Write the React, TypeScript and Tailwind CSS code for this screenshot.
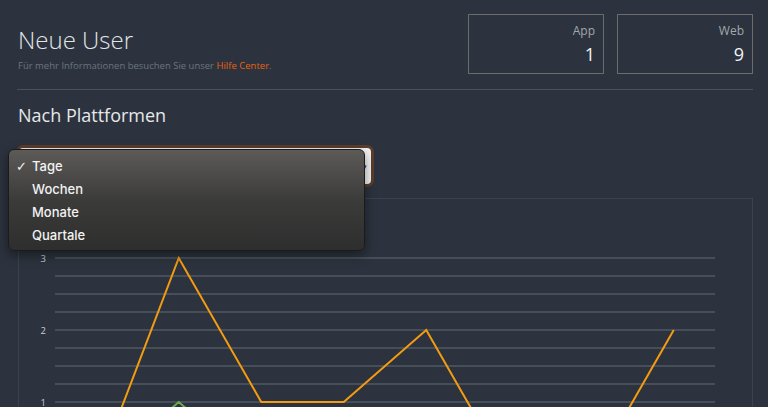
import React from 'react';

const webSeries = [0, 3, 1, 1, 2, 0, 0, 2];
const appSeries = [0, 1, 0, 0, 0, 0, 0, 0];

const xAt = (i: number) => 55 + 41.25 + 82.5 * i;
const yAt = (v: number) => 474 - v * 72;

const toPoints = (data: number[]) => data.map((v, i) => `${xAt(i)},${yAt(v)}`).join(' ');

const StatBox: React.FC<{ label: string; value: string }> = ({ label, value }) => (
  <div className="w-[136px] h-[60px] border border-[#6c6c6c] pr-[8px] pt-[8px] text-right">
    <div className="text-[12px] leading-[16px] text-[#a3a7ab]">{label}</div>
    <div className="mt-[3px] text-[18px] leading-[24px] text-[#f1f2f3]">{value}</div>
  </div>
);

const options = ['Tage', 'Wochen', 'Monate', 'Quartale'];

export default function App() {
  const gridYs = Array.from({ length: 9 }, (_, k) => 258 + 18 * k);

  return (
    <div className="h-[407px] w-[768px] overflow-hidden bg-[#2c333e] font-['Open_Sans',sans-serif]">
      <div className="pl-[17px] pr-[15px] pt-[14px]">
        {/* Header */}
        <div className="flex justify-between">
          <div className="pt-[10px] pl-px">
            <h1 className="text-[24px] font-light leading-[32px] text-[#e3e5e8]">Neue User</h1>
            <p className="mt-[4px] text-[9.5px] leading-[12px] text-[#6c747e]">
              Für mehr Informationen besuchen Sie unser <span className="text-[#e8620f]">Hilfe Center</span>.
            </p>
          </div>
          <div className="flex gap-[13px]">
            <StatBox label="App" value="1" />
            <StatBox label="Web" value="9" />
          </div>
        </div>

        <div className="mt-[15px] h-px bg-[#4a515b]" />

        <h2 className="mt-[13px] pl-px text-[18px] leading-[24px] text-[#e6e8ea]">Nach Plattformen</h2>

        {/* Select with open menu */}
        <div className="relative mt-[18px] -ml-px w-[358px] h-[42px] rounded-[7px] border-[3px] border-[#5d3d2c] bg-[#f3f3f3] flex items-center justify-end pr-[4px]">
          <span className="text-[7px] leading-none text-[#333]">▾</span>
          <div className="absolute left-[-11px] top-[1px] w-[357px] h-[102px] rounded-[6px] border border-[#1b1b1b] bg-gradient-to-b from-[#5d5b58] via-[#3b3b3a] to-[#2e2e2e] py-[5px] font-['Inter',sans-serif] text-[13px] font-medium text-[#f2f2f2] shadow-[0_4px_12px_rgba(0,0,0,0.45)]">
            {options.map((o, i) => (
              <div key={o} className="flex h-[23px] items-center">
                <span className="w-[23px] pl-[7px] font-['DejaVu_Sans',sans-serif] text-[13px] leading-none">{i === 0 ? '✓' : ''}</span>
                <span>{o}</span>
              </div>
            ))}
          </div>
        </div>

        {/* Chart panel */}
        <div className="mt-[11px] ml-px w-[735px] h-[230px] border border-[#3a424c]">
          <svg width="733" height="229" viewBox="19 199 733 229" className="block">
            {gridYs.map((y) => (
              <line key={y} x1="55" x2="715" y1={y} y2={y} stroke="#464e58" strokeWidth="2" />
            ))}
            {[3, 2, 1].map((v) => (
              <text key={v} x="46" y={yAt(v) + 3.5} textAnchor="end" fontSize="9.5" fill="#c9cdd1" fontFamily="Open Sans, sans-serif">
                {v}
              </text>
            ))}
            <polyline points={toPoints(appSeries)} fill="none" stroke="#6aab4e" strokeWidth="2" strokeLinejoin="miter" />
            <polyline points={toPoints(webSeries)} fill="none" stroke="#f39c12" strokeWidth="2" strokeLinejoin="miter" />
          </svg>
        </div>
      </div>
    </div>
  );
}
